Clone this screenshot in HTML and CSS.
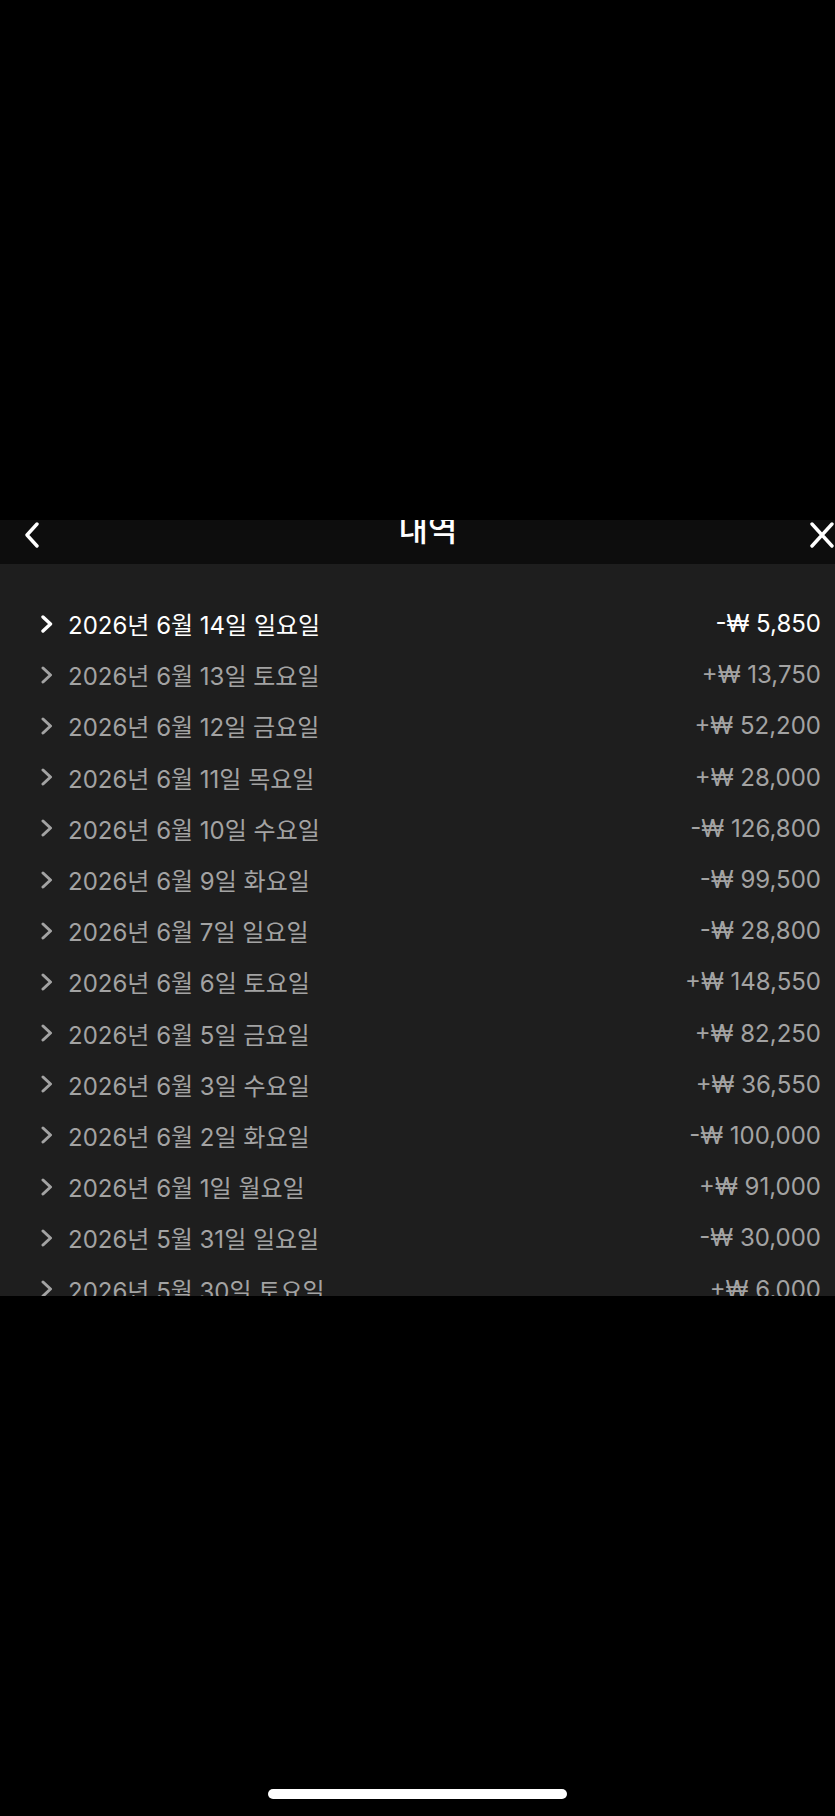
FILE: index.html
```html
<!DOCTYPE html>
<html lang="ko">
<head>
  <meta charset="UTF-8">
  <meta name="viewport" content="width=device-width, initial-scale=1.0">
  <title>내역</title>
  <link rel="stylesheet" href="styles.css">
</head>
<body>
  <div class="screen">
    <div class="top-space"></div>

    <!-- header -->
    <div class="header">
      <svg class="back" width="16" height="26" viewBox="0 0 16 26">
        <path d="M13 2 L3 13 L13 24" fill="none" stroke="#fff" stroke-width="3.4" stroke-linecap="round" stroke-linejoin="round"/>
      </svg>
      <div class="title">내역</div>
      <svg class="close" width="24" height="26" viewBox="0 0 24 26">
        <path d="M2 2 L22 24 M22 2 L2 24" fill="none" stroke="#fff" stroke-width="3.4" stroke-linecap="round"/>
      </svg>
    </div>

    <!-- history list -->
    <div class="list">
      <div class="row active">
        <span class="date"><svg class="chev" width="12" height="18" viewBox="0 0 12 18"><path d="M2 2 L9.5 9 L2 16"/></svg>2026년 6월 14일 일요일</span>
        <span class="amount">-₩ 5,850</span>
      </div>
      <div class="row">
        <span class="date"><svg class="chev" width="12" height="18" viewBox="0 0 12 18"><path d="M2 2 L9.5 9 L2 16"/></svg>2026년 6월 13일 토요일</span>
        <span class="amount">+₩ 13,750</span>
      </div>
      <div class="row">
        <span class="date"><svg class="chev" width="12" height="18" viewBox="0 0 12 18"><path d="M2 2 L9.5 9 L2 16"/></svg>2026년 6월 12일 금요일</span>
        <span class="amount">+₩ 52,200</span>
      </div>
      <div class="row">
        <span class="date"><svg class="chev" width="12" height="18" viewBox="0 0 12 18"><path d="M2 2 L9.5 9 L2 16"/></svg>2026년 6월 11일 목요일</span>
        <span class="amount">+₩ 28,000</span>
      </div>
      <div class="row">
        <span class="date"><svg class="chev" width="12" height="18" viewBox="0 0 12 18"><path d="M2 2 L9.5 9 L2 16"/></svg>2026년 6월 10일 수요일</span>
        <span class="amount">-₩ 126,800</span>
      </div>
      <div class="row">
        <span class="date"><svg class="chev" width="12" height="18" viewBox="0 0 12 18"><path d="M2 2 L9.5 9 L2 16"/></svg>2026년 6월 9일 화요일</span>
        <span class="amount">-₩ 99,500</span>
      </div>
      <div class="row">
        <span class="date"><svg class="chev" width="12" height="18" viewBox="0 0 12 18"><path d="M2 2 L9.5 9 L2 16"/></svg>2026년 6월 7일 일요일</span>
        <span class="amount">-₩ 28,800</span>
      </div>
      <div class="row">
        <span class="date"><svg class="chev" width="12" height="18" viewBox="0 0 12 18"><path d="M2 2 L9.5 9 L2 16"/></svg>2026년 6월 6일 토요일</span>
        <span class="amount">+₩ 148,550</span>
      </div>
      <div class="row">
        <span class="date"><svg class="chev" width="12" height="18" viewBox="0 0 12 18"><path d="M2 2 L9.5 9 L2 16"/></svg>2026년 6월 5일 금요일</span>
        <span class="amount">+₩ 82,250</span>
      </div>
      <div class="row">
        <span class="date"><svg class="chev" width="12" height="18" viewBox="0 0 12 18"><path d="M2 2 L9.5 9 L2 16"/></svg>2026년 6월 3일 수요일</span>
        <span class="amount">+₩ 36,550</span>
      </div>
      <div class="row">
        <span class="date"><svg class="chev" width="12" height="18" viewBox="0 0 12 18"><path d="M2 2 L9.5 9 L2 16"/></svg>2026년 6월 2일 화요일</span>
        <span class="amount">-₩ 100,000</span>
      </div>
      <div class="row">
        <span class="date"><svg class="chev" width="12" height="18" viewBox="0 0 12 18"><path d="M2 2 L9.5 9 L2 16"/></svg>2026년 6월 1일 월요일</span>
        <span class="amount">+₩ 91,000</span>
      </div>
      <div class="row">
        <span class="date"><svg class="chev" width="12" height="18" viewBox="0 0 12 18"><path d="M2 2 L9.5 9 L2 16"/></svg>2026년 5월 31일 일요일</span>
        <span class="amount">-₩ 30,000</span>
      </div>
      <div class="row">
        <span class="date"><svg class="chev" width="12" height="18" viewBox="0 0 12 18"><path d="M2 2 L9.5 9 L2 16"/></svg>2026년 5월 30일 토요일</span>
        <span class="amount">+₩ 6,000</span>
      </div>
    </div>

    <div class="bottom">
      <div class="home-bar"></div>
    </div>
  </div>
</body>
</html>
```

FILE: styles.css
```css
body {
  margin: 0;
  background: #000;
  font-family: Inter, "Noto Sans CJK KR", sans-serif;
}
.screen {
  height: 1816px;
  display: flex;
  flex-direction: column;
  overflow: hidden;
}
.top-space {
  height: 520px;
  flex: none;
}
.header {
  height: 44px;
  flex: none;
  background: #0d0d0d;
  display: flex;
  align-items: flex-start;
  overflow: hidden;
}
.back {
  margin: 2px 0 0 24px;
}
.title {
  flex: 1;
  text-align: center;
  color: #fff;
  font-size: 32px;
  font-weight: 500;
  line-height: 34px;
  margin-top: -7px;
  padding-left: 6px;
}
.close {
  margin: 2px 1px 0 0;
}
.list {
  height: 732px;
  flex: none;
  background: #1e1e1e;
  padding-top: 34px;
  box-sizing: border-box;
  overflow: hidden;
}
.row {
  height: 51.2px;
  display: flex;
  align-items: center;
  justify-content: space-between;
  padding: 0 14px 0 41px;
  color: #a3a3a3;
  font-size: 24px;
}
.date {
  display: flex;
  align-items: center;
}
.chev {
  margin-right: 15px;
}
.chev path {
  fill: none;
  stroke: currentColor;
  stroke-width: 3;
  stroke-linecap: round;
  stroke-linejoin: round;
}
.row.active {
  color: #fff;
}
.row.active .chev path {
  stroke-width: 3.4;
}
.bottom {
  flex: 1;
  display: flex;
  justify-content: center;
  align-items: flex-end;
  padding-bottom: 17px;
}
.home-bar {
  width: 299px;
  height: 10px;
  border-radius: 5px;
  background: #fff;
}
```
